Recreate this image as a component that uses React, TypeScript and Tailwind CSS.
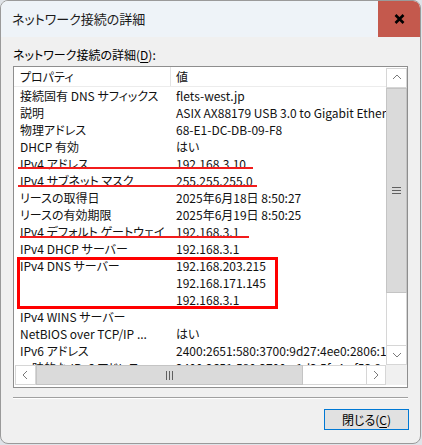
import React from "react";

const jp = "font-['Noto_Sans_CJK_JP','Noto_Sans_CJK_SC',sans-serif] [font-feature-settings:'palt']";

const rows: [string, string][] = [
  ["接続固有 DNS サフィックス", "flets-west.jp"],
  ["説明", "ASIX AX88179 USB 3.0 to Gigabit Ethernet Adapter"],
  ["物理アドレス", "68-E1-DC-DB-09-F8"],
  ["DHCP 有効", "はい"],
  ["IPv4 アドレス", "192.168.3.10"],
  ["IPv4 サブネット マスク", "255.255.255.0"],
  ["リースの取得日", "2025年6月18日 8:50:27"],
  ["リースの有効期限", "2025年6月19日 8:50:25"],
  ["IPv4 デフォルト ゲートウェイ", "192.168.3.1"],
  ["IPv4 DHCP サーバー", "192.168.3.1"],
  ["IPv4 DNS サーバー", "192.168.203.215"],
  ["", "192.168.171.145"],
  ["", "192.168.3.1"],
  ["IPv4 WINS サーバー", ""],
  ["NetBIOS over TCP/IP ...", "はい"],
  ["IPv6 アドレス", "2400:2651:580:3700:9d27:4ee0:2806:1b2c"],
  ["一時的な IPv6 アドレス", "2400:2651:580:3700:a1d3:5fe4:af53:9c21"],
];

function Chevron({ dir }: { dir: "up" | "down" | "left" | "right" }) {
  const pts = {
    up: "2,7 6,3 10,7",
    down: "2,4 6,8 10,4",
    left: "7,2 3,6 7,10",
    right: "4,2 8,6 4,10",
  }[dir];
  return (
    <svg width="12" height="12" viewBox="0 0 12 12">
      <polyline points={pts} fill="none" stroke="#7a7a7a" strokeWidth="1" />
    </svg>
  );
}

function ArrowBox({ dir, className = "" }: { dir: "up" | "down" | "left" | "right"; className?: string }) {
  return (
    <div className={`flex items-center justify-center bg-white border border-[#d6d6d6] shrink-0 ${className}`}>
      <Chevron dir={dir} />
    </div>
  );
}

export default function App() {
  return (
    <div className={`w-[422px] h-[445px] bg-[#dfe3e8] ${jp}`}>
      <div className="w-[421px] h-[444px] flex flex-col rounded-lg overflow-hidden border border-[#9a9a9a] bg-[#f0f0f0]">
        {/* title bar */}
        <div className="h-[36px] flex items-center bg-[#eef3f8] shrink-0">
          <div className="flex-1 pl-[11px] text-[13px] text-[#1a1a1a]">ネットワーク接続の詳細</div>
          <div className="w-[42px] h-full bg-[#c4594d] flex items-center justify-center">
            <svg width="11" height="10" viewBox="0 0 11 10">
              <path d="M1.5 1 L9.5 9 M9.5 1 L1.5 9" stroke="#000" strokeWidth="2.6" />
            </svg>
          </div>
        </div>

        <div className="flex-1 flex flex-col px-[12px] pt-[9px]">
          <div className="h-[20px] text-[12px] leading-[17px] text-black">
            ネットワーク接続の詳細(<span className="underline underline-offset-2">D</span>):
          </div>

          {/* list box */}
          <div className="h-[322px] border border-[#8e8e8e] bg-white flex flex-col">
            <div className="flex h-[298px]">
              <div className="relative flex-1 overflow-hidden text-[12px] text-[#111]">
                <div className="h-[20px] flex border-b border-[#ececec]">
                  <div className="w-[157px] shrink-0 pl-[6px] border-r border-[#e3e3e3] leading-[19px]">プロパティ</div>
                  <div className="pl-[5px] leading-[19px]">値</div>
                </div>
                {rows.map(([k, v], i) => (
                  <div key={i} className="h-[17px] flex leading-[17px] whitespace-nowrap">
                    <div className="w-[157px] shrink-0 pl-[6px] overflow-hidden">{k}</div>
                    <div className="pl-[5px] shrink-0">{v}</div>
                  </div>
                ))}
                {/* annotations */}
                <div className="absolute left-[4px] top-[100px] w-[235px] h-[2px] bg-[#f21c1c]" />
                <div className="absolute left-[4px] top-[118px] w-[239px] h-[2px] bg-[#f21c1c]" />
                <div className="absolute left-[6px] top-[169px] w-[229px] h-[2px] bg-[#f21c1c]" />
                <div className="absolute left-[3px] top-[190px] w-[261px] h-[52px] border-[3px] border-[#ff0000]" />
              </div>
              {/* vertical scrollbar */}
              <div className="w-[21px] shrink-0 flex flex-col pt-px">
                <ArrowBox dir="up" className="h-[20px]" />
                <div className="h-[205px] shrink-0 bg-[#dadada] border border-[#c4c4c4] flex items-center justify-center">
                  <div className="flex flex-col gap-[2px]">
                    <div className="w-[9px] h-px bg-[#606060]" />
                    <div className="w-[9px] h-px bg-[#606060]" />
                    <div className="w-[9px] h-px bg-[#606060]" />
                  </div>
                </div>
                <div className="flex-1 bg-white border-x border-[#d6d6d6]" />
                <ArrowBox dir="down" className="h-[20px]" />
              </div>
            </div>
            {/* horizontal scrollbar */}
            <div className="h-[20px] flex pl-px">
              <ArrowBox dir="left" className="w-[21px]" />
              <div className="w-[267px] shrink-0 bg-[#dadada] border border-[#c4c4c4] flex items-center justify-center">
                <div className="flex gap-[2px]">
                  <div className="w-px h-[9px] bg-[#606060]" />
                  <div className="w-px h-[9px] bg-[#606060]" />
                  <div className="w-px h-[9px] bg-[#606060]" />
                </div>
              </div>
              <div className="w-[63px] shrink-0 bg-white border-y border-[#d6d6d6]" />
              <ArrowBox dir="right" className="w-[20px]" />
              <div className="flex-1 bg-[#f0f0f0]" />
            </div>
          </div>

          <div className="mt-[9px] h-px bg-[#a0a0a0] border-b border-white box-content" />

          <div className="flex justify-end mt-[10px]">
            <button className="w-[85px] h-[21px] bg-[#e1e1e1] border border-[#0078d4] text-[12px] leading-[19px] text-black mr-[-1px]">
              閉じる(<span className="underline underline-offset-2">C</span>)
            </button>
          </div>
        </div>
      </div>
    </div>
  );
}
